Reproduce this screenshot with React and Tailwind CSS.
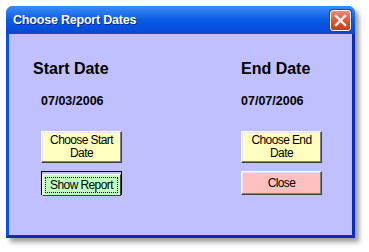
import React from 'react';

const btnBase =
  'flex flex-col items-center justify-center w-[81px] text-black text-[12px] leading-[13px] tracking-[-0.6px] border border-t-white border-l-white border-r-[#404040] border-b-[#404040] shadow-[inset_-1px_-1px_0_#808080,inset_1px_1px_0_#e8e8e8]';

const CloseIcon = () => (
  <div className="w-[21px] h-[21px] rounded-[3px] border border-white bg-gradient-to-b from-[#f08a68] via-[#dd5a32] to-[#c13f16] flex items-center justify-center shadow-[0_0_0_1px_#1a3fbf]">
    <svg width="13" height="13" viewBox="0 0 13 13">
      <path d="M2 2 L11 11 M11 2 L2 11" stroke="white" strokeWidth="2.4" strokeLinecap="square" />
    </svg>
  </div>
);

export default function App() {
  return (
    <div className="w-[369px] h-[252px] bg-white pt-[6px] pl-[6px]" style={{ fontFamily: '"Liberation Sans", Arial, sans-serif' }}>
      <div className="w-[349px] h-[232px] flex flex-col rounded-t-[7px] shadow-[4px_4px_5px_rgba(0,0,0,0.4)] bg-[#0a46d8]">
        {/* Title bar */}
        <div className="h-[28px] shrink-0 flex items-center justify-between pl-[7px] pr-[4px] rounded-t-[7px] bg-gradient-to-b from-[#3d8cf8] via-[#0a5ae6] to-[#0548d4]">
          <span className="text-white font-bold text-[12.5px] tracking-[-0.2px] [text-shadow:1px_1px_0_#0a1f8f]">Choose Report Dates</span>
          <CloseIcon />
        </div>

        {/* Body */}
        <div className="flex-1 flex border-l-[3px] border-l-[#0a50e8] border-r-[3px] border-r-[#0a2cb8] border-b-[3px] border-b-[#0a2cb8]">
          <div className="flex-1 bg-[#c0c0ff] flex pl-[24px] pt-[26px]">
            {/* Start column */}
            <div className="w-[208px] flex flex-col">
              <div className="text-[16px] leading-[18px] font-bold text-black">Start Date</div>
              <div className="mt-[16px] ml-[8px] text-[12.5px] leading-[14px] font-bold text-black">07/03/2006</div>
              <div className="mt-[23px] ml-[8px] flex flex-col gap-[8px]">
                <button className={`${btnBase} h-[32px] bg-[#ffffc0]`}>
                  <span>Choose Start</span>
                  <span>Date</span>
                </button>
                <div className="w-[81px] h-[24px] border border-black">
                  <button className="w-full h-full bg-[#c0ffc0] p-[2px] border border-t-white border-l-white border-r-[#404040] border-b-[#404040] text-black text-[12px] tracking-[-0.6px]">
                    <div className="w-full h-full border border-dotted border-black flex items-center justify-center">
                      Show Report
                    </div>
                  </button>
                </div>
              </div>
            </div>

            {/* End column */}
            <div className="flex flex-col">
              <div className="text-[16px] leading-[18px] font-bold text-black">End Date</div>
              <div className="mt-[16px] text-[12.5px] leading-[14px] font-bold text-black">07/07/2006</div>
              <div className="mt-[23px] flex flex-col gap-[8px]">
                <button className={`${btnBase} h-[32px] bg-[#ffffc0]`}>
                  <span>Choose End</span>
                  <span>Date</span>
                </button>
                <button className={`${btnBase} h-[24px] bg-[#ffc0c0]`}>Close</button>
              </div>
            </div>
          </div>
        </div>
      </div>
    </div>
  );
}
